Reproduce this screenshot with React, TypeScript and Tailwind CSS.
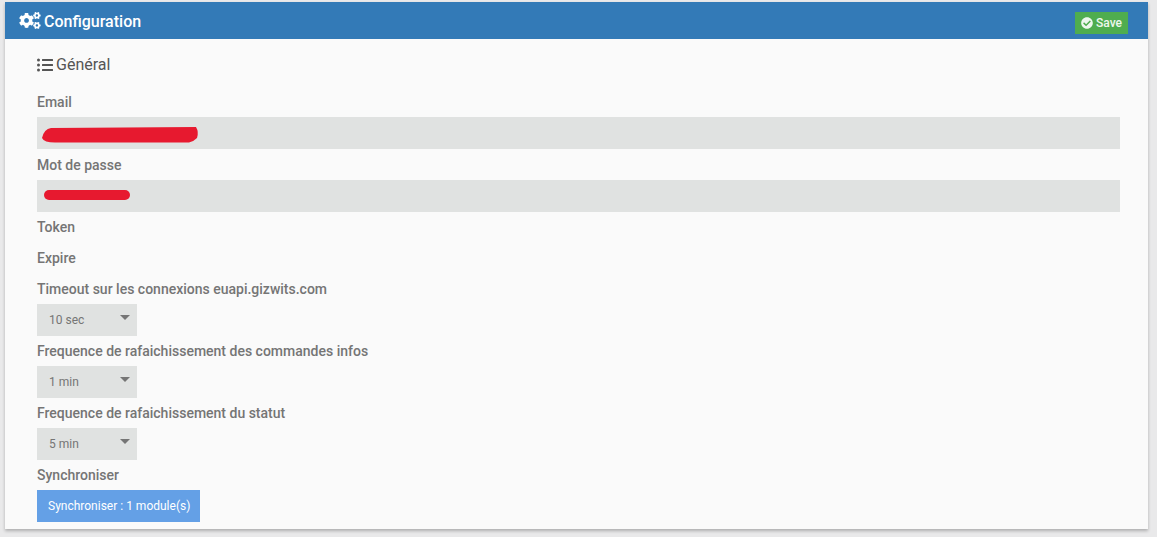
import React from "react";
import { FaCogs, FaListUl, FaCheckCircle } from "react-icons/fa";

function Label({ children, h = "h-[31px]" }: { children: React.ReactNode; h?: string }) {
  return (
    <div className={`${h} flex items-center text-[14px] font-medium leading-none text-[#757575]`}>{children}</div>
  );
}

function Select({ value }: { value: string }) {
  return (
    <div className="relative flex h-8 w-[100px] items-center bg-[#e0e2e1] pl-3 text-[12px] text-[#757575]">
      {value}
      <span className="absolute left-[83px] top-[11px] h-0 w-0 border-x-[5px] border-t-[5px] border-x-transparent border-t-[#757575]" />
    </div>
  );
}

export default function App() {
  return (
    <div className="h-[537px] w-[1157px] overflow-hidden bg-[#e9e9ea] pl-[5px] pt-[2px] font-['Roboto',sans-serif]">
      <div className="h-[527px] w-[1143px] bg-[#fafafa] shadow-[0_2px_3px_rgba(0,0,0,0.25)]">
        <div className="flex h-[37px] items-center justify-between bg-[#337ab7] pl-[14px] pr-5 text-white">
          <div className="flex items-center gap-[3px] text-[16px] font-medium">
            <FaCogs className="h-[17px] w-[22px]" />
            <span className="relative top-px">Configuration</span>
          </div>
          <button className="mt-[5px] flex h-[22px] w-[53px] items-center gap-[3px] bg-[#4fad4f] pl-[6px] text-[12px] font-medium text-white/90">
            <FaCheckCircle className="h-3 w-3" />
            Save
          </button>
        </div>
        <div className="pl-8 pr-7">
          <div className="flex h-[47px] items-center gap-[3px] pt-[5px] text-[16px] text-[#555555]">
            <FaListUl className="h-4 w-4" />
            <span>Général</span>
          </div>
          <Label>Email</Label>
          <div className="relative h-8 bg-[#e0e2e1]">
            <svg className="absolute left-1 top-[9px]" width="158" height="18" viewBox="0 0 158 18">
              <path d="M1 12 Q3 3 10 2 L155 1 Q158 6 156 12 Q152 16 148 16.5 L14 16.5 Q3 16.5 1 12 Z" fill="#e7192f" />
            </svg>
          </div>
          <Label>Mot de passe</Label>
          <div className="relative h-8 bg-[#e0e2e1]">
            <svg className="absolute left-[6px] top-[8px]" width="88" height="14" viewBox="0 0 88 14">
              <path d="M6 7 L82 7" stroke="#e7192f" strokeWidth="10" strokeLinecap="round" fill="none" />
            </svg>
          </div>
          <div className="-mt-px"><Label>Token</Label></div>
          <Label>Expire</Label>
          <Label h="h-[31px]">Timeout sur les connexions euapi.gizwits.com</Label>
          <Select value="10 sec" />
          <Label h="h-[30px]">Frequence de rafaichissement des commandes infos</Label>
          <Select value="1 min" />
          <Label h="h-[30px]">Frequence de rafaichissement du statut</Label>
          <Select value="5 min" />
          <Label h="h-[30px]">Synchroniser</Label>
          <button className="flex h-8 w-[163px] items-center bg-[#64a0e6] pl-[11px] text-[12px] text-white">
            Synchroniser : 1 module(s)
          </button>
        </div>
      </div>
    </div>
  );
}
